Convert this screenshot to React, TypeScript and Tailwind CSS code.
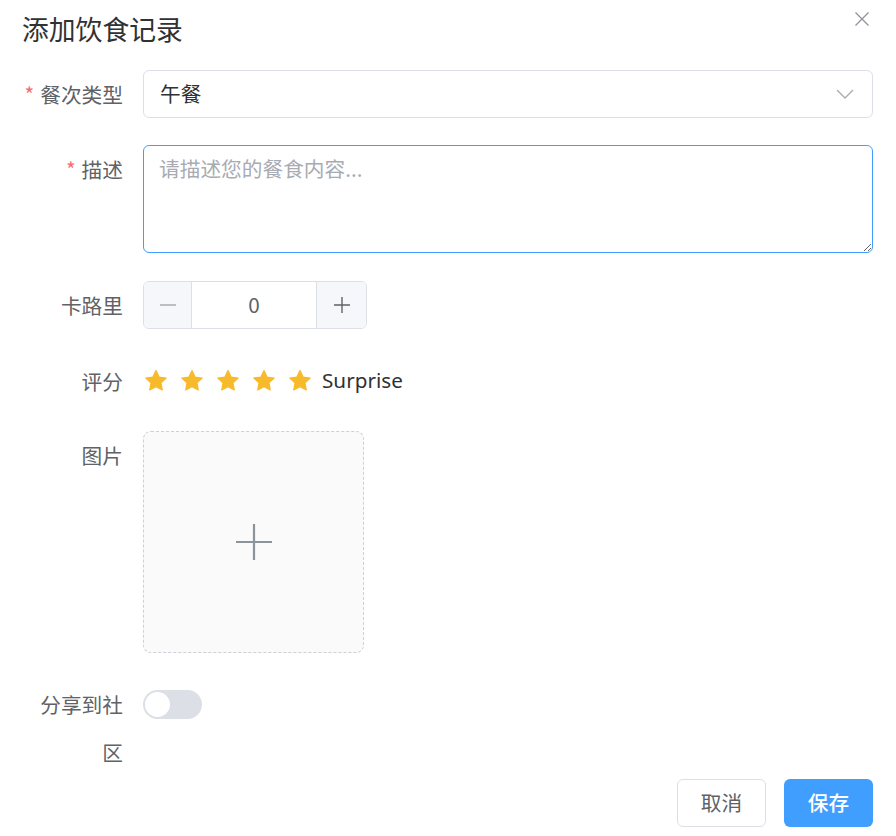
import { useState } from 'react'

const font = { fontFamily: '"Noto Sans CJK SC", "Noto Sans", sans-serif' }

function Star() {
  return (
    <svg width="24" height="24" viewBox="0 0 24 24" className="shrink-0">
      <path
        d="M12 1.6l3.1 6.5 7.1.9-5.2 4.9 1.3 7.1L12 17.6 5.7 21l1.3-7.1L1.8 9l7.1-.9z"
        fill="#f7ba2a"
        stroke="#f7ba2a"
        strokeWidth="1.2"
        strokeLinejoin="round"
      />
    </svg>
  )
}

function Label({ text, required, wrap }: { text: string; required?: boolean; wrap?: boolean }) {
  return (
    <div
      className={
        wrap
          ? 'w-[121px] shrink-0 pl-[8px] pr-[20px] text-right text-[20.7px] leading-[48px] text-[#606266]'
          : 'w-[121px] shrink-0 whitespace-nowrap pr-[20px] text-right text-[20.7px] leading-[48px] text-[#606266]'
      }
    >
      {required && <span className="mr-[6px] text-[#f56c6c]">*</span>}
      {text}
    </div>
  )
}

export default function App() {
  const [calories, setCalories] = useState(0)

  return (
    <div className="relative h-[836px] w-[896px] bg-white px-[22px]" style={font}>
      {/* header */}
      <div className="h-[70px] pt-[11px]">
        <h2 className="text-[26.8px] leading-[36px] text-[#303133]">添加饮食记录</h2>
      </div>
      <button className="absolute right-[26px] top-[11px] text-[#909399]">
        <svg width="16" height="16" viewBox="0 0 16 16">
          <path d="M1.5 1.5l13 13M14.5 1.5l-13 13" stroke="#909399" strokeWidth="1.3" />
        </svg>
      </button>

      <div className="pr-[1px]">
        {/* meal type */}
        <div className="mb-[27px] flex">
          <Label text="餐次类型" required />
          <div className="flex h-[48px] flex-1 items-center justify-between rounded-[6px] border border-[#dcdfe6] px-[16px]">
            <span className="text-[20.7px] text-[#303133]">午餐</span>
            <svg width="18" height="10" viewBox="0 0 18 10" className="mr-[2px]">
              <path d="M1 1l8 8 8-8" fill="none" stroke="#a8abb2" strokeWidth="1.3" />
            </svg>
          </div>
        </div>

        {/* description */}
        <div className="mb-[28px] flex">
          <Label text="描述" required />
          <textarea
            className="h-[108px] flex-1 rounded-[6px] border border-[#409eff] px-[15px] py-[7px] text-[20.7px] leading-[30px] text-[#303133] outline-none placeholder:text-[#a8abb2]"
            placeholder="请描述您的餐食内容..."
          />
        </div>

        {/* calories */}
        <div className="mb-[28px] flex">
          <Label text="卡路里" />
          <div className="flex h-[48px] w-[224px] overflow-hidden rounded-[6px] border border-[#dcdfe6]">
            <button
              onClick={() => setCalories(Math.max(0, calories - 1))}
              className="flex w-[48px] items-center justify-center border-r border-[#dcdfe6] bg-[#f5f7fa]"
            >
              <svg width="18" height="18" viewBox="0 0 18 18">
                <path d="M1 9h16" stroke="#a8abb2" strokeWidth="1.4" />
              </svg>
            </button>
            <div className="flex flex-1 items-center justify-center text-[20.7px] text-[#606266]">{calories}</div>
            <button
              onClick={() => setCalories(calories + 1)}
              className="flex w-[50px] items-center justify-center border-l border-[#dcdfe6] bg-[#f5f7fa]"
            >
              <svg width="18" height="18" viewBox="0 0 18 18">
                <path d="M1 9h16M9 1v16" stroke="#606266" strokeWidth="1.4" />
              </svg>
            </button>
          </div>
        </div>

        {/* rating */}
        <div className="mb-[26px] flex">
          <Label text="评分" />
          <div className="flex h-[48px] items-center gap-[12px] pl-[1px]">
            <Star />
            <Star />
            <Star />
            <Star />
            <Star />
            <span
              className="ml-[-2px] text-[20.7px] text-[#303133]"
              style={{ fontFamily: '"Noto Sans", "Noto Sans CJK SC", sans-serif' }}
            >
              Surprise
            </span>
          </div>
        </div>

        {/* image */}
        <div className="mb-[27px] flex">
          <Label text="图片" />
          <div className="flex h-[222px] w-[221px] items-center justify-center rounded-[8px] border border-dashed border-[#cdd0d6] bg-[#fafafa]">
            <svg width="36" height="36" viewBox="0 0 36 36">
              <path d="M0 18h36M18 0v36" stroke="#8c939d" strokeWidth="2.2" />
            </svg>
          </div>
        </div>

        {/* share */}
        <div className="flex">
          <Label text="分享到社区" wrap />
          <div className="flex h-[48px] items-center">
            <div className="relative h-[29px] w-[59px] rounded-full bg-[#dcdfe6]">
              <span className="absolute left-[2px] top-[2px] h-[25px] w-[25px] rounded-full bg-white" />
            </div>
          </div>
        </div>
      </div>

      {/* footer */}
      <div className="mt-[3px] flex justify-end gap-[18px] pr-[1px]">
        <button className="h-[48px] w-[89px] rounded-[6px] border border-[#dcdfe6] bg-white text-[20.7px] text-[#606266]">
          取消
        </button>
        <button className="h-[48px] w-[89px] rounded-[6px] bg-[#409eff] text-[20.7px] font-medium text-white">
          保存
        </button>
      </div>
    </div>
  )
}
